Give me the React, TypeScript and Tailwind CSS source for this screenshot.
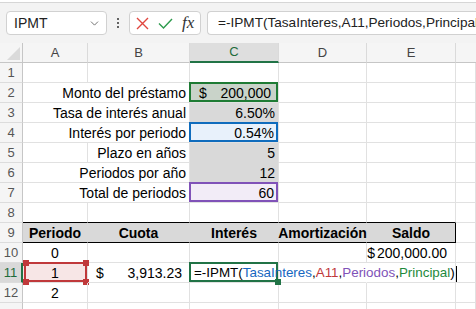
import React from "react";
import { ChevronDown } from "lucide-react";

const cellFont = "font-['Liberation_Sans',Arial,sans-serif] text-[14px] text-black";

function RowHead({ n, active }: { n?: number; active?: boolean }) {
  return (
    <div
      className={
        "w-[23px] shrink-0 h-full flex items-center justify-center border-b border-[#dcdcdc] font-['Liberation_Sans',Arial,sans-serif] text-[13px] " +
        (active
          ? "bg-[#d9d9d9] text-[#1e6b3a] border-r-2 border-r-[#217346]"
          : "bg-[#f5f5f5] text-[#555] border-r border-r-[#c6c6c6]")
      }
    >
      {n}
    </div>
  );
}

function Cell({
  w,
  className = "",
  children,
}: {
  w: string;
  className?: string;
  children?: React.ReactNode;
}) {
  return (
    <div className={`${w} shrink-0 h-full relative flex items-center px-[3px] pt-[2px] whitespace-nowrap border-r border-b border-[#e1e1e1] ${cellFont} ${className}`}>
      {children}
    </div>
  );
}

function Box({ color }: { color: string }) {
  return <div className={`absolute -left-[1px] -top-[1px] right-0 bottom-0 border-2 pointer-events-none ${color}`} />;
}

function Handle({ pos, color }: { pos: string; color: string }) {
  return <div className={`absolute w-[6px] h-[6px] ${pos} ${color}`} />;
}

// label spanning A+B, right aligned (text spills into A)
function Label({ text }: { text: string }) {
  return (
    <div className={`w-[167px] shrink-0 h-full flex items-center justify-end px-[3px] pt-[2px] whitespace-nowrap border-r border-b border-[#e1e1e1] ${cellFont}`}>
      {text}
    </div>
  );
}

export default function App() {
  const A = "w-[65px]";
  const B = "w-[102px]";
  const C = "w-[89px]";
  const D = "w-[88px]";
  const E = "w-[89px]";
  const F = "flex-1";

  return (
    <div className="w-[476px] h-[309px] overflow-hidden bg-white select-none">
      {/* formula bar */}
      <div className="h-[43px] bg-[#f3f3f3] flex flex-col">
        <div className="h-[3px] bg-white border-b border-[#d6d6d6]" />
        <div className="flex items-center pt-[8px] pl-[6px]">
          <div className="w-[101px] h-[24px] bg-white border border-[#d1d1d1] rounded-[4px] flex items-center justify-between pl-[7px] pr-[5px]">
            <span className="font-['Liberation_Sans',Arial,sans-serif] text-[14px] text-[#222]">IPMT</span>
            <ChevronDown size={13} strokeWidth={1.5} className="text-[#555]" />
          </div>
          <div className="w-[22px] flex flex-col items-center gap-[2px]">
            <span className="w-[2px] h-[2px] bg-[#333] rounded-full" />
            <span className="w-[2px] h-[2px] bg-[#333] rounded-full" />
            <span className="w-[2px] h-[2px] bg-[#333] rounded-full" />
          </div>
          <div className="w-[72px] h-[24px] bg-white border border-[#d1d1d1] rounded-[4px] flex items-center pl-[6px] gap-[9px]">
            <svg width="13" height="13" viewBox="0 0 13 13">
              <path d="M1 1 L12 12 M12 1 L1 12" stroke="#e0463f" strokeWidth="1.4" fill="none" />
            </svg>
            <svg width="15" height="11" viewBox="0 0 15 11">
              <path d="M1 5.5 L5.5 10 L14 1" stroke="#2d9b4d" strokeWidth="1.4" fill="none" />
            </svg>
            <span className="font-['Liberation_Serif',serif] italic text-[17px] leading-none text-[#333] -mt-[2px]">fx</span>
          </div>
          <div className="ml-[6px] flex-1 min-w-0 h-[24px] bg-white border border-[#d1d1d1] border-r-0 rounded-l-[4px] flex items-center pl-[10px] overflow-hidden whitespace-nowrap">
            <span className="font-['Liberation_Sans',Arial,sans-serif] text-[13.6px] text-[#222]">=-IPMT(TasaInteres,A11,Periodos,Principal)</span>
          </div>
        </div>
      </div>

      {/* column headers */}
      <div className="flex h-[20px] bg-[#f5f5f5] font-['Liberation_Sans',Arial,sans-serif] text-[13px] text-[#444]">
        <div className="w-[23px] shrink-0 h-full border-r border-b border-[#c6c6c6] relative">
          <svg className="absolute right-[2px] bottom-[2px]" width="13" height="13" viewBox="0 0 13 13">
            <path d="M13 0 L13 13 L0 13 Z" fill="#dadada" />
          </svg>
        </div>
        <div className={`${A} shrink-0 flex items-center justify-center border-r border-[#dadada] border-b border-b-[#c6c6c6]`}>A</div>
        <div className={`${B} shrink-0 flex items-center justify-center border-r border-[#dadada] border-b border-b-[#c6c6c6]`}>B</div>
        <div className={`${C} shrink-0 flex items-center justify-center bg-[#dedede] text-[#1e6b3a] border-r border-[#dadada] border-b-2 border-b-[#217346]`}>C</div>
        <div className={`${D} shrink-0 flex items-center justify-center border-r border-[#dadada] border-b border-b-[#c6c6c6]`}>D</div>
        <div className={`${E} shrink-0 flex items-center justify-center border-r border-[#dadada] border-b border-b-[#c6c6c6]`}>E</div>
        <div className={`${F} border-b border-b-[#c6c6c6]`} />
      </div>

      {/* row 1 */}
      <div className="flex h-[20px]">
        <RowHead n={1} />
        <Cell w={A} />
        <Cell w={B} />
        <Cell w={C} />
        <Cell w={D} />
        <Cell w={E} />
        <Cell w={F} />
      </div>

      {/* row 2 */}
      <div className="flex h-[20px]">
        <RowHead n={2} />
        <Label text="Monto del préstamo" />
        <Cell w={C} className="bg-[#c9d3c9] justify-between">
          <Box color="border-[#1e7b34]" />
          <span className="pl-[6px]">$</span>
          <span className="pr-[4px]">200,000</span>
        </Cell>
        <Cell w={D} />
        <Cell w={E} />
        <Cell w={F} />
      </div>

      {/* row 3 */}
      <div className="flex h-[20px]">
        <RowHead n={3} />
        <Label text="Tasa de interés anual" />
        <Cell w={C} className="bg-[#d9d9d9] justify-end border-b-[#d9d9d9]">6.50%</Cell>
        <Cell w={D} />
        <Cell w={E} />
        <Cell w={F} />
      </div>

      {/* row 4 */}
      <div className="flex h-[20px]">
        <RowHead n={4} />
        <Label text="Interés por periodo" />
        <Cell w={C} className="bg-[#e8f1fb] justify-end">
          <Box color="border-[#0f6cbd]" />
          <span className="pr-[1px]">0.54%</span>
        </Cell>
        <Cell w={D} />
        <Cell w={E} />
        <Cell w={F} />
      </div>

      {/* row 5 */}
      <div className="flex h-[20px]">
        <RowHead n={5} />
        <Cell w={A} />
        <Cell w={B} className="justify-end">Plazo en años</Cell>
        <Cell w={C} className="bg-[#d9d9d9] justify-end border-b-[#d9d9d9]">5</Cell>
        <Cell w={D} />
        <Cell w={E} />
        <Cell w={F} />
      </div>

      {/* row 6 */}
      <div className="flex h-[20px]">
        <RowHead n={6} />
        <Label text="Periodos por año" />
        <Cell w={C} className="bg-[#d9d9d9] justify-end">12</Cell>
        <Cell w={D} />
        <Cell w={E} />
        <Cell w={F} />
      </div>

      {/* row 7 */}
      <div className="flex h-[20px]">
        <RowHead n={7} />
        <Label text="Total de periodos" />
        <Cell w={C} className="bg-[#f2ecf7] justify-end">
          <Box color="border-[#8052b8]" />
          <span className="pr-[1px]">60</span>
        </Cell>
        <Cell w={D} />
        <Cell w={E} />
        <Cell w={F} />
      </div>

      {/* row 8 */}
      <div className="flex h-[20px]">
        <RowHead n={8} />
        <Cell w={A} className="border-b-black" />
        <Cell w={B} className="border-b-black" />
        <Cell w={C} className="border-b-black" />
        <Cell w={D} className="border-b-black" />
        <Cell w={E} className="border-b-black" />
        <Cell w={F} />
      </div>

      {/* row 9 */}
      <div className="flex h-[20px]">
        <RowHead n={9} />
        <Cell w={A} className="bg-[#d9d9d9] justify-center font-bold text-[13px] border-r-[#d9d9d9] border-b-black">Periodo</Cell>
        <Cell w={B} className="bg-[#d9d9d9] justify-center font-bold text-[13px] border-r-[#d9d9d9] border-b-black">Cuota</Cell>
        <Cell w={C} className="bg-[#d9d9d9] justify-center font-bold text-[13px] border-r-[#d9d9d9] border-b-black">Interés</Cell>
        <Cell w={D} className="bg-[#d9d9d9] justify-center font-bold text-[13px] border-r-[#d9d9d9] border-b-black">Amortización</Cell>
        <Cell w={E} className="bg-[#d9d9d9] justify-center font-bold text-[13px] border-r-black border-b-black">Saldo</Cell>
        <Cell w={F} />
      </div>

      {/* row 10 */}
      <div className="flex h-[20px]">
        <RowHead n={10} />
        <Cell w={A} className="justify-center">0</Cell>
        <Cell w={B} />
        <Cell w={C} />
        <Cell w={D} />
        <Cell w={E} className="justify-end pr-[8px]">$<span className="ml-[2px]">200,000.00</span></Cell>
        <Cell w={F} />
      </div>

      {/* row 11 */}
      <div className="flex h-[20px]">
        <RowHead n={11} active />
        <Cell w={A} className="bg-[#f7e6e6] justify-center">
          <div className="absolute left-[1px] -top-[1px] right-0 bottom-0 border-2 border-[#c0393b]" />
          <Handle pos="left-0 -top-[3px]" color="bg-[#c0393b]" />
          <Handle pos="-right-[2px] -top-[3px]" color="bg-[#c0393b]" />
          <Handle pos="left-0 -bottom-[3px]" color="bg-[#c0393b]" />
          <Handle pos="-right-[2px] -bottom-[3px]" color="bg-[#c0393b]" />
          1
        </Cell>
        <Cell w={B} className="justify-between">
          <span className="pl-[5px]">$</span>
          <span className="pr-[4px]">3,913.23</span>
        </Cell>
        <Cell w={C} className="z-10 overflow-visible">
          <Box color="border-[#217346]" />
          <Handle pos="-right-[3px] -bottom-[3px]" color="bg-[#217346]" />
          <div className="absolute left-[1px] top-[1px] bottom-[1px] w-[266px] flex items-center pt-[2px] pl-[3px] text-[13.4px]">
            <span>=-IPMT(</span>
            <span className="text-[#1667c1]">TasaInteres</span>
            <span>,</span>
            <span className="text-[#c0393b]">A11</span>
            <span>,</span>
            <span className="text-[#8052b8]">Periodos</span>
            <span>,</span>
            <span className="text-[#1e8a3c]">Principal</span>
            <span>)</span>
            <span className="ml-[1px] w-[1px] h-[16px] bg-black" />
          </div>
        </Cell>
        <Cell w={D} className="bg-white border-r-white" />
        <Cell w={E} className="bg-white" />
        <Cell w={F} />
      </div>

      {/* row 12 */}
      <div className="flex h-[20px]">
        <RowHead n={12} />
        <Cell w={A} className="justify-center">2</Cell>
        <Cell w={B} />
        <Cell w={C} />
        <Cell w={D} />
        <Cell w={E} />
        <Cell w={F} />
      </div>

      {/* row 13, only its top edge shows */}
      <div className="flex h-[20px]">
        <RowHead />
        <Cell w={A} />
        <Cell w={B} />
        <Cell w={C} />
        <Cell w={D} />
        <Cell w={E} />
        <Cell w={F} />
      </div>
    </div>
  );
}
